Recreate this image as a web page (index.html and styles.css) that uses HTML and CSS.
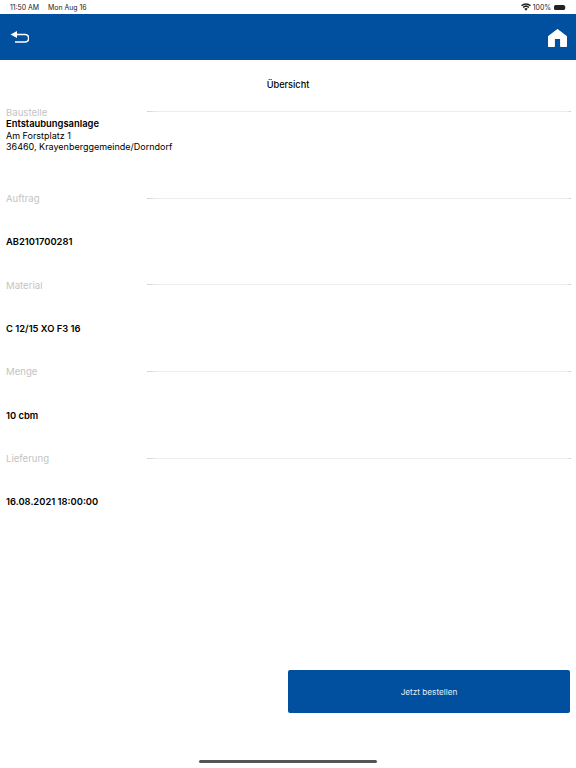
FILE: index.html
```html
<!DOCTYPE html>
<html lang="de">
<head>
  <meta charset="UTF-8">
  <meta name="viewport" content="width=device-width, initial-scale=1.0">
  <title>Übersicht</title>
  <link rel="stylesheet" href="styles.css">
</head>
<body>

  <!-- Status bar -->
  <div class="status-bar">
    <span class="status-time">11:50 AM</span>
    <span class="status-date">Mon Aug 16</span>
    <span class="status-right">
      <svg class="wifi" width="10" height="8" viewBox="0 0 20 15">
        <path d="M10 15 6.6 11.2a5 5 0 0 1 6.8 0z" fill="#222"/>
        <path d="M5.2 9.6 3.2 7.4a10 10 0 0 1 13.6 0l-2 2.2a7 7 0 0 0-9.6 0z" fill="#222"/>
        <path d="M1.9 6 0 3.8a15 15 0 0 1 20 0L18.100 6a12.200 12.200 0 0 0-16.200 0z" fill="#222"/>
      </svg>
      <span>100%</span>
      <span class="battery"></span>
    </span>
  </div>

  <header class="app-bar">
    <svg class="icon-back" width="19" height="12" viewBox="0 0 19 12">
      <path d="M7 0 .5 3.500 7 7z" fill="#fff"/>
      <path d="M6 3.500h9a3.400 3.400 0 0 1 0 7.500H5" fill="none" stroke="#fff" stroke-width="1.700"/>
    </svg>
    <svg class="icon-home" width="19" height="18" viewBox="0 0 19 18">
      <path d="M9.500 .7 18.300 7.500V17.300H12.800V9.300H6.200V17.300H.7V7.500z" fill="#fff" stroke="#fff" stroke-width="1.400" stroke-linejoin="round"/>
    </svg>
  </header>

  <h1 class="page-title">Übersicht</h1>

  <main class="overview">
    <section class="block block-top">
      <div class="block-head"><span class="block-label">Baustelle</span><span class="block-line"></span></div>
      <div class="block-body">
        <strong>Entstaubungsanlage</strong>
        <span>Am Forstplatz 1</span>
        <span>36460, Krayenberggemeinde/Dorndorf</span>
      </div>
    </section>
    <section class="block">
      <div class="block-head"><span class="block-label">Auftrag</span><span class="block-line"></span></div>
      <div class="block-body"><strong>AB2101700281</strong></div>
    </section>
    <section class="block">
      <div class="block-head"><span class="block-label">Material</span><span class="block-line"></span></div>
      <div class="block-body"><strong>C 12/15 XO F3 16</strong></div>
    </section>
    <section class="block">
      <div class="block-head"><span class="block-label">Menge</span><span class="block-line"></span></div>
      <div class="block-body"><strong>10 cbm</strong></div>
    </section>
    <section class="block">
      <div class="block-head"><span class="block-label">Lieferung</span><span class="block-line"></span></div>
      <div class="block-body"><strong>16.08.2021 18:00:00</strong></div>
    </section>
  </main>

  <div class="actions">
    <button class="order-button">Jetzt bestellen</button>
  </div>

  <div class="home-indicator"></div>

</body>
</html>
```

FILE: styles.css
```css
body {
  font-family: Inter, "Liberation Sans", Arial, sans-serif;
  margin: 0;
  padding: 0;
  background-color: #fff;
  color: #000;
  height: 768px;
  overflow: hidden;
}

/* Status bar */
.status-bar {
  height: 14px;
  display: flex;
  align-items: center;
  padding: 0 8px 0 10px;
  font-size: 6.900px;
  color: #222;
}

.status-date {
  margin-left: 9px;
}

.status-right {
  margin-left: auto;
  display: flex;
  align-items: center;
  gap: 2px;
}

.battery {
  width: 11px;
  height: 5px;
  margin: 0 3px 0 1px;
  background-color: #222;
  border-radius: 1.5px;
  box-shadow: 2px 0 0 -1.5px #888;
}

/* App bar */
.app-bar {
  height: 46px;
  background-color: #00509f;
  display: flex;
  align-items: center;
  justify-content: space-between;
  padding: 0 9px 0 10px;
}

.icon-home {
  margin-top: 1px;
}

.page-title {
  margin: 19px 0 0;
  height: 12px;
  line-height: 12px;
  font-size: 9.200px;
  font-weight: 500;
  text-align: center;
}

/* Sections */
.overview {
  margin-top: 15px;
  padding: 0 5px 0 6px;
}

.block {
  height: 86.670px;
}

.block-head {
  display: flex;
  align-items: center;
  height: 12px;
}

.block-label {
  width: 141px;
  font-size: 9.600px;
  color: #c4c4c4;
}

.block-line {
  flex: 1;
  height: 1px;
  margin-bottom: 1px;
  background: linear-gradient(to right, #d0d0d0, #ececec 10px, #ececec calc(100% - 4px), #d0d0d0);
}

.block-body {
  height: 75px;
  display: flex;
  flex-direction: column;
  justify-content: center;
  font-size: 9px;
  line-height: 11.500px;
}

.block-top .block-body {
  justify-content: flex-start;
}

.block-body strong {
  font-size: 9.400px;
  font-weight: 600;
}

/* Button */
.actions {
  position: absolute;
  top: 670px;
  right: 6px;
}

.order-button {
  display: block;
  width: 282px;
  height: 43px;
  border: none;
  border-radius: 2px;
  background-color: #00509f;
  color: #e0edf8;
  font-family: inherit;
  font-size: 8.200px;
}

.home-indicator {
  position: absolute;
  left: 199px;
  top: 760px;
  width: 178px;
  height: 3px;
  border-radius: 2px;
  background-color: #555;
}
```
